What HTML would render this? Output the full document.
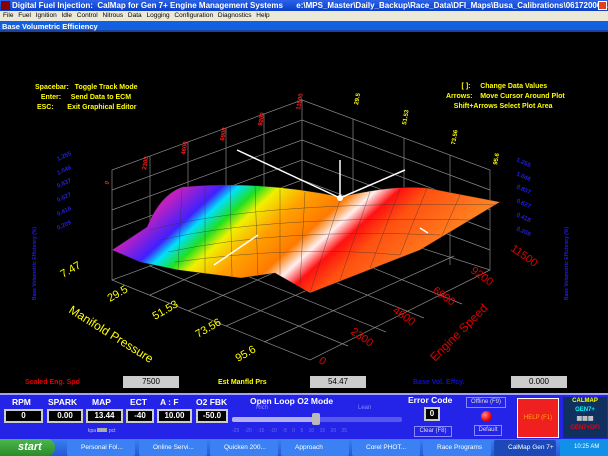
<!DOCTYPE html>
<html><head><meta charset="utf-8"><style>
*{margin:0;padding:0;box-sizing:border-box}
body{width:608px;height:456px;overflow:hidden;background:#000;font-family:"Liberation Sans",sans-serif;position:relative}
.a{position:absolute;white-space:nowrap}
.title{left:0;top:0;width:608px;height:11px;background:linear-gradient(#2a62e8,#0a3fc8);color:#fff;font-size:8px;font-weight:bold;line-height:11px;padding-left:12px}
.menu{left:0;top:11px;width:608px;height:10px;background:#ece9d8;font-size:6.5px;line-height:10px;color:#000;padding-left:3px;word-spacing:3px}
.sub{left:0;top:21px;width:608px;height:11px;background:#1360e0;color:#fff;font-size:7.5px;font-weight:bold;line-height:11px;padding-left:2px;border-bottom:2px solid #1a40a0}
.y{color:#ff0;font-size:7px;font-weight:bold;font-family:"Liberation Sans Narrow","Liberation Sans",sans-serif}
.box{background:#000;border:2px solid #ccc;color:#fff;font-size:8px;font-weight:bold;text-align:center;line-height:10px;height:14px}
.lab{color:#fff;font-size:8.5px;font-weight:bold}
.tb{top:440px;height:16px;background:#3c81f3;font-size:6.5px;color:#fff;line-height:16px;padding-left:14px;border-radius:2px}
</style></head><body>
<div class="a title">Digital Fuel Injection:&nbsp; CalMap for Gen 7+ Engine Management Systems &nbsp;&nbsp;&nbsp;&nbsp; e:\MPS_Master\Daily_Backup\Race_Data\DFI_Maps\Busa_Calibrations\06172006\...</div>
<div class="a" style="left:1px;top:1px;width:9px;height:9px;background:#800"></div>
<div class="a" style="left:598px;top:1px;width:9px;height:9px;background:#e04020;border:1px solid #fff"></div>
<div class="a menu">File Fuel Ignition Idle&nbsp;Control Nitrous Data&nbsp;Logging Configuration Diagnostics Help</div>
<div class="a sub">Base Volumetric Efficiency</div>

<svg class="a" style="left:0;top:34px" width="608" height="336" viewBox="0 34 608 336">
<defs>
<linearGradient id="g" gradientUnits="userSpaceOnUse" x1="175" y1="194" x2="322" y2="355">
<stop offset="0" stop-color="#c020c0"/><stop offset="0.12" stop-color="#4020ff"/><stop offset="0.17" stop-color="#00e0ff"/><stop offset="0.24" stop-color="#20e020"/><stop offset="0.30" stop-color="#f0f000"/><stop offset="0.41" stop-color="#ffa000"/><stop offset="0.54" stop-color="#ff7a00"/><stop offset="0.61" stop-color="#fff0f0"/><stop offset="0.68" stop-color="#ff1010"/><stop offset="0.77" stop-color="#ff5010"/><stop offset="1" stop-color="#ff8020"/></linearGradient>
</defs>
<g stroke="#888" stroke-width="0.7" fill="none">
<path d="M112 170 L302 100 L302 210 L112 280 Z"/>
<path d="M302 100 L490 170 L490 270 L302 210"/>
<path d="M112 190 L302 120 L490 190 M112 210 L302 140 L490 210 M112 230 L302 160 L490 230 M112 250 L302 180 L490 250"/>
<path d="M150 156 V266 M188 142 V252 M226 128 V238 M264 114 V224 M353 119 V229 M404 138 V248 M450 155 V265"/>
<path d="M112 280 L310 360 L490 270 M150 266 L348 346 M188 252 L386 332 M226 238 L424 318 M264 224 L462 304 M150 295 L340 210 M188 311 L378 226 M226 326 L416 242 M264 342 L454 256"/>
</g>
<path fill="url(#g)" stroke="#222" stroke-width="0.4" d="M112 250 L147 227 Q160 195 182 187 Q260 180 341 197 Q390 185 427 188 L500 202 L420 250 L310 293 L275 273 L241 278 L178 270 L140 262 Z"/>
<g stroke="#333" stroke-width="0.5" fill="none" opacity="0.7">
<path d="M182 187 L178 270 M205 186 L205 273 M230 185 L232 276 M255 186 L258 277 M280 189 L280 275 M305 192 L300 285 M341 197 L310 293 M370 192 L340 280 M400 189 L370 268 M427 188 L400 255 M460 195 L440 240"/>
<path d="M150 230 Q260 200 500 205 M160 240 Q270 215 470 220 M168 252 Q280 228 440 235 M175 262 Q300 245 400 255"/>
</g>
<g stroke="#fff" stroke-width="1.5"><path d="M237 150 L340 198 M340 198 V160 M340 198 L405 170 M214 265 L258 235 M420 228 L428 233"/></g>
<circle cx="340" cy="198" r="3" fill="#fff"/>
<g font-family="Liberation Sans" font-weight="bold" font-size="6" fill="#ff2020">
<text transform="translate(108,185) rotate(-65)">0</text><text transform="translate(146,170) rotate(-80)">2300</text><text transform="translate(185,155) rotate(-80)">4600</text><text transform="translate(224,141) rotate(-80)">6900</text><text transform="translate(262,126) rotate(-80)">9200</text><text transform="translate(300,110) rotate(-80)">11500</text></g>
<g font-family="Liberation Sans" font-weight="bold" font-size="6" fill="#ff0">
<text transform="translate(358,105) rotate(-80)">29.5</text><text transform="translate(406,125) rotate(-80)">51.53</text><text transform="translate(455,145) rotate(-80)">73.56</text><text transform="translate(497,165) rotate(-80)">95.6</text></g>
<g font-family="Liberation Sans" font-weight="bold" font-size="6" fill="#2020e0">
<text transform="translate(58,230) rotate(-25)">0.209</text><text transform="translate(58,216) rotate(-25)">0.418</text><text transform="translate(58,202) rotate(-25)">0.627</text><text transform="translate(58,188) rotate(-25)">0.837</text><text transform="translate(58,175) rotate(-25)">1.046</text><text transform="translate(58,161) rotate(-25)">1.255</text>
<text transform="translate(516,161) rotate(25)">1.255</text><text transform="translate(516,175) rotate(25)">1.046</text><text transform="translate(516,188) rotate(25)">0.837</text><text transform="translate(516,202) rotate(25)">0.627</text><text transform="translate(516,216) rotate(25)">0.418</text><text transform="translate(516,230) rotate(25)">0.209</text>
<text transform="translate(36,300) rotate(-90)" font-size="5">Base Volumetric Efficiency (%)</text>
<text transform="translate(568,300) rotate(-90)" font-size="5">Base Volumetric Efficiency (%)</text></g>
<g font-family="Liberation Sans" font-size="11" fill="#ff0">
<text transform="translate(63,278) rotate(-30)">7.47</text><text transform="translate(110,302) rotate(-30)">29.5</text><text transform="translate(155,320) rotate(-30)">51.53</text><text transform="translate(198,338) rotate(-30)">73.56</text><text transform="translate(238,362) rotate(-30)">95.6</text>
<text transform="translate(68,312) rotate(32)" font-size="12">Manifold Pressure</text></g>
<g font-family="Liberation Sans" font-size="11" fill="#e00000">
<text transform="translate(318,362) rotate(35)">0</text><text transform="translate(350,333) rotate(35)">2300</text><text transform="translate(392,312) rotate(35)">4600</text><text transform="translate(432,292) rotate(35)">6900</text><text transform="translate(470,272) rotate(35)">9200</text><text transform="translate(510,250) rotate(35)">11500</text>
<text transform="translate(435,362) rotate(-45)" font-size="12">Engine Speed</text></g>
</svg>

<div class="a y" style="left:35px;top:83px;line-height:10px">Spacebar: &nbsp; Toggle Track Mode<br>&nbsp;&nbsp;&nbsp;Enter: &nbsp;&nbsp;&nbsp; Send Data to ECM<br>&nbsp;ESC: &nbsp;&nbsp;&nbsp;&nbsp;&nbsp; Exit Graphical Editor</div>
<div class="a y" style="left:446px;top:82px;line-height:10px">&nbsp;&nbsp;&nbsp;&nbsp;&nbsp;&nbsp;&nbsp;&nbsp;[ ]: &nbsp;&nbsp;&nbsp; Change Data Values<br>Arrows: &nbsp;&nbsp; Move Cursor Around Plot<br>&nbsp;&nbsp;&nbsp;&nbsp;Shift+Arrows Select Plot Area</div>

<div class="a" style="left:25px;top:379px;color:#e00000;font-size:7px;font-weight:bold">Scaled Eng. Spd</div>
<div class="a" style="left:123px;top:376px;width:56px;height:12px;background:#ccc;font-size:8px;text-align:center;line-height:12px">7500</div>
<div class="a" style="left:218px;top:379px;color:#ff0;font-size:7px;font-weight:bold">Est Manfld Prs</div>
<div class="a" style="left:310px;top:376px;width:56px;height:12px;background:#ccc;font-size:8px;text-align:center;line-height:12px">54.47</div>
<div class="a" style="left:413px;top:379px;color:#1010c0;font-size:7px;font-weight:bold">Base Vol. Effcy.</div>
<div class="a" style="left:511px;top:376px;width:56px;height:12px;background:#ccc;font-size:8px;text-align:center;line-height:12px">0.000</div>

<div class="a" style="left:0;top:393px;width:608px;height:47px;background:#2424e8;border-top:2px solid #a0a0ff"></div>
<div class="a lab" style="left:12px;top:397px">RPM</div><div class="a lab" style="left:48px;top:397px">SPARK</div><div class="a lab" style="left:92px;top:397px">MAP</div><div class="a lab" style="left:130px;top:397px">ECT</div><div class="a lab" style="left:160px;top:397px">A : F</div><div class="a lab" style="left:196px;top:397px">O2 FBK</div>
<div class="a box" style="left:4px;top:409px;width:39px">0</div><div class="a box" style="left:47px;top:409px;width:36px">0.00</div><div class="a box" style="left:86px;top:409px;width:37px">13.44</div><div class="a box" style="left:126px;top:409px;width:28px">-40</div><div class="a box" style="left:157px;top:409px;width:35px">10.00</div><div class="a box" style="left:196px;top:409px;width:32px">-50.0</div>
<div class="a" style="left:88px;top:428px;color:#ccc;font-size:5px">kpa <span style="background:#aaa;display:inline-block;width:10px;height:4px"></span> pct</div>
<div class="a lab" style="left:250px;top:396px">Open Loop O2 Mode</div>
<div class="a" style="left:256px;top:405px;color:#88f;font-size:6px">Rich</div><div class="a" style="left:358px;top:405px;color:#88f;font-size:6px">Lean</div>
<div class="a" style="left:232px;top:417px;width:170px;height:5px;background:#5858e8;border-radius:2px"></div>
<div class="a" style="left:232px;top:417px;width:85px;height:5px;background:#b0b0f0;border-radius:2px"></div>
<div class="a" style="left:312px;top:413px;width:8px;height:12px;background:#bbb;border-radius:2px"></div>
<div class="a" style="left:232px;top:428px;color:#6a6ae8;font-size:5px;word-spacing:4px">-25 -20 -15 -10 -5 0 5 10 15 20 25</div>
<div class="a lab" style="left:408px;top:395px">Error Code</div>
<div class="a box" style="left:424px;top:407px;width:16px">0</div>
<div class="a" style="left:414px;top:426px;width:38px;height:11px;border:1px solid #88f;color:#ddd;font-size:6px;text-align:center;line-height:9px">Clear (F8)</div>
<div class="a" style="left:466px;top:397px;width:40px;height:11px;border:1px solid #88f;color:#ddd;font-size:6px;text-align:center;line-height:9px">Offline (F9)</div>
<div class="a" style="left:481px;top:411px;width:11px;height:11px;border-radius:50%;background:radial-gradient(circle at 35% 35%,#f88,#e00 60%,#800)"></div>
<div class="a" style="left:474px;top:425px;width:28px;height:11px;border:1px solid #88f;color:#ddd;font-size:6px;text-align:center;line-height:9px">Default</div>
<div class="a" style="left:517px;top:398px;width:42px;height:40px;background:#f02020;border:1px solid #fff;color:#fa0;font-size:6px;text-align:center;line-height:38px">HELP (F1)</div>
<div class="a" style="left:563px;top:397px;width:44px;height:41px;background:#103060;font-size:6px;font-weight:bold;line-height:9px;text-align:center"><span style="color:#ff0">CALMAP</span><br><span style="color:#0ff">GEN7+</span><br><span style="color:#ccc">▦▦▦</span><br><span style="color:#e00">GEN7+DFI</span></div>

<div class="a" style="left:0;top:439px;width:608px;height:17px;background:linear-gradient(#3a80f0,#2458d8)"></div>
<div class="a" style="left:0;top:439px;width:55px;height:17px;background:linear-gradient(#4cb84c,#2a8a2a);border-radius:0 8px 8px 0;color:#fff;font-size:11px;font-style:italic;font-weight:bold;line-height:17px;padding-left:18px">start</div>
<div class="a tb" style="left:67px;width:68px">Personal Fol...</div>
<div class="a tb" style="left:139px;width:68px">Online Servi...</div>
<div class="a tb" style="left:210px;width:68px">Quicken 200...</div>
<div class="a tb" style="left:281px;width:68px">Approach</div>
<div class="a tb" style="left:352px;width:68px">Corel PHOT...</div>
<div class="a tb" style="left:423px;width:68px">Race Programs</div>
<div class="a tb" style="left:494px;width:62px;background:#1c48b8">CalMap Gen 7+</div>
<div class="a" style="left:560px;top:439px;width:48px;height:17px;background:#1090e8;color:#fff;font-size:6px;line-height:17px;padding-left:14px">10:25 AM</div>
</body></html>
